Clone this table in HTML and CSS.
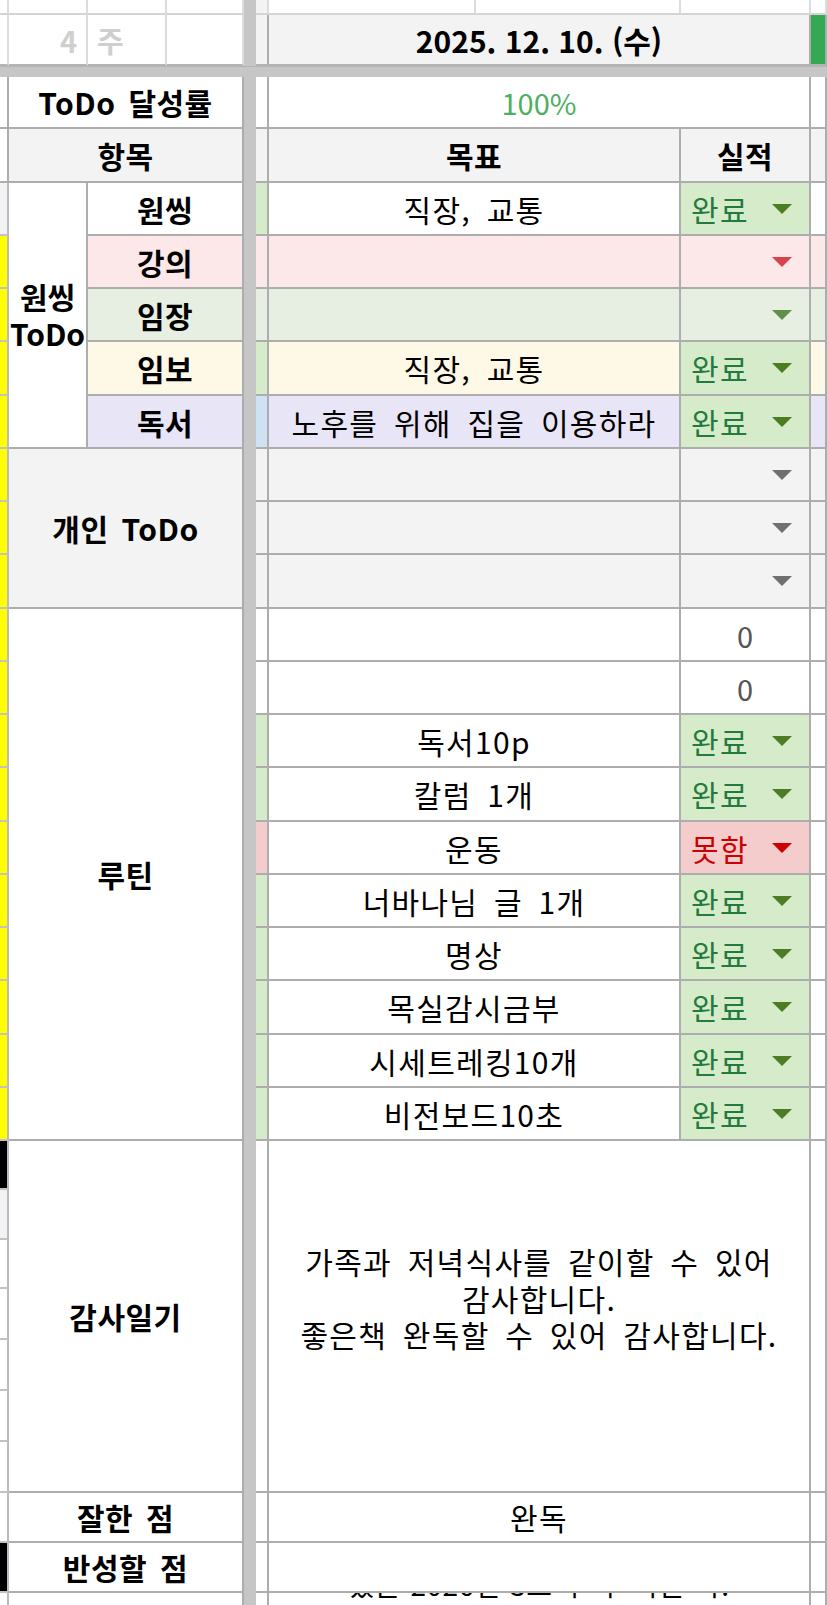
FILE: index.html
```html
<!DOCTYPE html>
<html lang="ko">
<head>
<meta charset="utf-8">
<title>ToDo</title>
<link rel="stylesheet" href="styles.css">
</head>
<body>
<div class="sheet">
  <div class="vdiv"></div>
  <div class="hdiv"></div>

  <!-- row 1: partial top row -->
  <div class="c top"></div><div class="c top"></div><div class="c top"></div><div class="c top"></div>
  <div class="c top gray"></div><div class="c top"></div><div class="c top"></div><div class="c top"></div><div class="c top"></div>

  <!-- row 2: date -->
  <div class="c top datebot"></div>
  <div class="c top datebot right dim">4</div>
  <div class="c top datebot left dim">주</div>
  <div class="c top datebot"></div>
  <div class="c gray datebot"></div>
  <div class="c gray datebot s3 date">2025. 12. 10. (수)</div>
  <div class="c green-fill datebot"></div>

  <!-- row 4: achievement -->
  <div class="c"></div>
  <div class="c s3 lbl">ToDo 달성률</div>
  <div class="c"></div>
  <div class="c s3 pct">100%</div>
  <div class="c"></div>

  <!-- row 5: headers -->
  <div class="c"></div>
  <div class="c s3 gray lbl">항목</div>
  <div class="c gray"></div>
  <div class="c s2 gray lbl">목표</div>
  <div class="c gray lbl">실적</div>
  <div class="c gray"></div>

  <!-- 원씽 block -->
  <div class="c gray colA"></div>
  <div class="c r5 lbl two">원씽<br>ToDo</div>
  <div class="c s2 lbl">원씽</div>
  <div class="c ok-strip"></div>
  <div class="c s2 txt">직장, 교통</div>
  <div class="c chip ok"><span>완료</span><i class="arr arr-ok"></i></div>
  <div class="c"></div>

  <div class="c yel colA"></div>
  <div class="c s2 lbl pink">강의</div>
  <div class="c pink"></div>
  <div class="c s2 pink"></div>
  <div class="c chip pink end"><i class="arr arr-red"></i></div>
  <div class="c pink"></div>

  <div class="c yel colA"></div>
  <div class="c s2 lbl mint">임장</div>
  <div class="c mint"></div>
  <div class="c s2 mint"></div>
  <div class="c chip mint end"><i class="arr arr-mint"></i></div>
  <div class="c mint"></div>

  <div class="c yel colA"></div>
  <div class="c s2 lbl cream">임보</div>
  <div class="c ok-strip"></div>
  <div class="c s2 txt cream">직장, 교통</div>
  <div class="c chip ok"><span>완료</span><i class="arr arr-ok"></i></div>
  <div class="c cream"></div>

  <div class="c yel colA"></div>
  <div class="c s2 lbl lav">독서</div>
  <div class="c blue"></div>
  <div class="c s2 txt lav">노후를 위해 집을 이용하라</div>
  <div class="c chip ok"><span>완료</span><i class="arr arr-ok"></i></div>
  <div class="c lav"></div>

  <!-- 개인 ToDo -->
  <div class="c yel colA"></div>
  <div class="c s3 r3 gray lbl">개인 ToDo</div>
  <div class="c gray"></div>
  <div class="c s2 gray"></div>
  <div class="c chip gray end"><i class="arr arr-gray"></i></div>
  <div class="c gray"></div>

  <div class="c yel colA"></div>
  <div class="c gray"></div>
  <div class="c s2 gray"></div>
  <div class="c chip gray end"><i class="arr arr-gray"></i></div>
  <div class="c gray"></div>

  <div class="c yel colA"></div>
  <div class="c gray"></div>
  <div class="c s2 gray"></div>
  <div class="c chip gray end"><i class="arr arr-gray"></i></div>
  <div class="c gray"></div>

  <!-- 루틴 -->
  <div class="c yel colA"></div>
  <div class="c s3 r10 lbl">루틴</div>
  <div class="c"></div>
  <div class="c s2"></div>
  <div class="c num">0</div>
  <div class="c"></div>

  <div class="c yel colA"></div>
  <div class="c"></div>
  <div class="c s2"></div>
  <div class="c num">0</div>
  <div class="c"></div>

  <div class="c yel colA"></div>
  <div class="c ok-strip"></div>
  <div class="c s2 txt">독서10p</div>
  <div class="c chip ok"><span>완료</span><i class="arr arr-ok"></i></div>
  <div class="c"></div>

  <div class="c yel colA"></div>
  <div class="c ok-strip"></div>
  <div class="c s2 txt">칼럼 1개</div>
  <div class="c chip ok"><span>완료</span><i class="arr arr-ok"></i></div>
  <div class="c"></div>

  <div class="c yel colA"></div>
  <div class="c bad-strip"></div>
  <div class="c s2 txt">운동</div>
  <div class="c chip bad"><span>못함</span><i class="arr arr-bad"></i></div>
  <div class="c"></div>

  <div class="c yel colA"></div>
  <div class="c ok-strip"></div>
  <div class="c s2 txt">너바나님 글 1개</div>
  <div class="c chip ok"><span>완료</span><i class="arr arr-ok"></i></div>
  <div class="c"></div>

  <div class="c yel colA"></div>
  <div class="c ok-strip"></div>
  <div class="c s2 txt">명상</div>
  <div class="c chip ok"><span>완료</span><i class="arr arr-ok"></i></div>
  <div class="c"></div>

  <div class="c yel colA"></div>
  <div class="c ok-strip"></div>
  <div class="c s2 txt">목실감시금부</div>
  <div class="c chip ok"><span>완료</span><i class="arr arr-ok"></i></div>
  <div class="c"></div>

  <div class="c yel colA"></div>
  <div class="c ok-strip"></div>
  <div class="c s2 txt">시세트레킹10개</div>
  <div class="c chip ok"><span>완료</span><i class="arr arr-ok"></i></div>
  <div class="c"></div>

  <div class="c yel colA"></div>
  <div class="c ok-strip"></div>
  <div class="c s2 txt">비전보드10초</div>
  <div class="c chip ok"><span>완료</span><i class="arr arr-ok"></i></div>
  <div class="c"></div>

  <!-- 감사일기 -->
  <div class="c black colA"></div>
  <div class="c s3 r7 lbl">감사일기</div>
  <div class="c r7"></div>
  <div class="c s3 r7 txt multi">가족과 저녁식사를 같이할 수 있어<br>감사합니다.<br>좋은책 완독할 수 있어 감사합니다.<br>&nbsp;</div>
  <div class="c r7"></div>
  <div class="c gray colA"></div>
  <div class="c colA"></div>
  <div class="c colA"></div>
  <div class="c colA"></div>
  <div class="c colA"></div>
  <div class="c colA"></div>

  <!-- 잘한 점 -->
  <div class="c colA"></div>
  <div class="c s3 lbl">잘한 점</div>
  <div class="c"></div>
  <div class="c s3 txt">완독</div>
  <div class="c"></div>

  <!-- 반성할 점 -->
  <div class="c black colA"></div>
  <div class="c s3 lbl">반성할 점</div>
  <div class="c"></div>
  <div class="c s3"></div>
  <div class="c"></div>

  <!-- partial last row -->
  <div class="c colA"></div>
  <div class="c s3"></div>
  <div class="c"></div>
  <div class="c s3 clip"><div class="cliptext">있는 2026년 3도 수 주 하는 다.</div></div>
  <div class="c"></div>
</div>
</body>
</html>
```

FILE: styles.css
```css
html, body {
  margin: 0;
  padding: 0;
  background: #ffffff;
  overflow: hidden;
}

body {
  font-family: "Noto Sans CJK KR", "Noto Sans", sans-serif;
  color: #000;
}

.sheet {
  display: grid;
  width: 827px;
  grid-template-columns: 9px 79px 79px 77px 12px 13px 207px 205px 130px 16px;
  grid-template-rows:
    15px 51px 11px 52px 54px
    53px 53px 53px 54px
    53px 53px 53px 54px
    53px 53px 53px 54px
    53px 53px 53px 54px
    53px 53px
    49px 50px 49px 51px 51px 51px 51px
    50px 50px 50px;
}

.vdiv {
  grid-column: 5;
  grid-row: 1 / -1;
  background: #c6c6c6;
}

.hdiv {
  grid-column: 1 / -1;
  grid-row: 3;
  background: #c6c6c6;
  border-top: 1px solid #b4b4b4;
}

.c {
  box-sizing: border-box;
  border-right: 2px solid #adadad;
  border-bottom: 2px solid #adadad;
  display: flex;
  align-items: center;
  justify-content: center;
  overflow: hidden;
  white-space: nowrap;
  font-size: 30px;
  background: #fff;
}

.s2 { grid-column: span 2; }
.s3 { grid-column: span 3; }
.r3 { grid-row: span 3; }
.r5 { grid-row: span 5; }
.r7 { grid-row: span 7; }
.r10 { grid-row: span 10; }

.top {
  border-right-color: #dcdcdc;
  border-bottom-color: #d4d4d4;
}
.datebot { border-bottom-color: #b4b4b4; }

.colA {
  border-right-color: #b9bac2;
  border-bottom-color: #c2c2c2;
}

.gray { background: #f3f3f3; }
.yel { background: #ffff00; }
.black { background: #000; }
.green-fill { background: #34a853; }
.pink { background: #fce8e8; }
.mint { background: #e6efe1; }
.cream { background: #fef8e6; }
.lav { background: #e8e5f6; }
.blue { background: #cfe2f3; }
.ok-strip { background: #d6ebc9; }
.bad-strip { background: #f4cccc; }

.right { justify-content: flex-end; padding-right: 9px; }
.left { justify-content: flex-start; padding-left: 9px; }

.dim {
  color: #cfcfcf;
  font-weight: 700;
  font-size: 29px;
}

.date {
  font-weight: 700;
  font-size: 30px;
  letter-spacing: 0;
  word-spacing: 0;
}

.lbl {
  font-weight: 700;
  letter-spacing: 0.5px;
  word-spacing: 4px;
}

.two {
  flex-direction: column;
  text-align: center;
  line-height: 37px;
  letter-spacing: 0;
}

.txt {
  letter-spacing: 1.3px;
  word-spacing: 6px;
}

.multi {
  white-space: normal;
  text-align: center;
  line-height: 36.5px;
}

.pct {
  color: #4caf62;
  font-size: 29px;
}

.num {
  color: #555;
  font-size: 29px;
}

.chip {
  justify-content: space-between;
  padding: 0 17px 0 10px;
}
.chip.end { justify-content: flex-end; }
.ok { background: #d6ebc9; color: #237a3d; letter-spacing: 1.3px; }
.bad { background: #f4cccc; color: #cc0000; letter-spacing: 1.3px; }

.arr {
  display: block;
  width: 0;
  height: 0;
  border-left: 10px solid transparent;
  border-right: 10px solid transparent;
  border-top: 10px solid #4b7d23;
}
.arr-ok { border-top-color: #4b7d23; }
.arr-bad { border-top-color: #cc0000; }
.arr-red { border-top-color: #d9434a; }
.arr-mint { border-top-color: #5e8f4b; }
.arr-gray { border-top-color: #707070; }

.clip {
  align-items: flex-start;
}
.cliptext {
  margin-top: -27px;
  line-height: 36px;
  font-size: 28px;
  letter-spacing: 0.5px;
  word-spacing: 1px;
}
```
